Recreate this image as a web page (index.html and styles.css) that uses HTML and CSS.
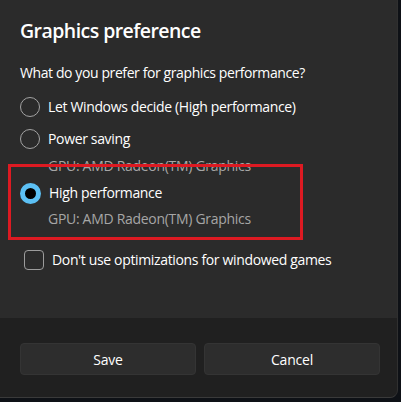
FILE: index.html
```html
<!DOCTYPE html>
<html>
<head>
<meta charset="utf-8">
<link rel="stylesheet" href="styles.css">
</head>
<body>
<div class="dialog">
  <div class="content">
    <div class="title">Graphics preference</div>
    <div class="question">What do you prefer for graphics performance?</div>
    <div class="options">
      <div class="option">
        <span class="radio"></span>
        <span class="label">Let Windows decide (High performance)</span>
      </div>
      <div class="option">
        <span class="radio"></span>
        <span class="label">Power saving</span>
      </div>
      <div class="gpu">GPU: AMD Radeon(TM) Graphics</div>
      <div class="option">
        <span class="radio selected"></span>
        <span class="label">High performance</span>
      </div>
      <div class="gpu">GPU: AMD Radeon(TM) Graphics</div>
    </div>
    <div class="check-row">
      <span class="checkbox"></span>
      <span class="label">Don't use optimizations for windowed games</span>
    </div>
    <div class="highlight"></div>
  </div>
  <div class="footer">
    <div class="btn">Save</div>
    <div class="btn">Cancel</div>
  </div>
</div>
</body>
</html>
```
FILE: styles.css
```css
html, body {
  margin: 0;
  padding: 0;
  background: #0e1116;
}
body {
  width: 401px;
  height: 402px;
  overflow: hidden;
  font-family: "Open Sans", "Noto Sans", sans-serif;
  color: #ffffff;
}
.dialog {
  width: 397px;
  height: 397px;
  background: #2b2b2b;
  border-bottom-right-radius: 8px;
  overflow: hidden;
  display: flex;
  flex-direction: column;
  border-bottom: 1px solid #3a3a3a;
  border-right: 1px solid #303030;
}
.content {
  position: relative;
  height: 318px;
  padding: 17px 20px 0 20px;
  box-sizing: border-box;
}
.title {
  font-size: 19.5px;
  font-weight: 600;
  line-height: 28px;
  letter-spacing: -0.55px;
}
.question {
  margin-top: 18px;
  font-size: 14px;
  line-height: 20px;
  letter-spacing: -0.4px;
}
.options {
  display: flex;
  flex-direction: column;
  margin-top: 8px;
}
.option {
  display: flex;
  align-items: center;
  gap: 8px;
  height: 32px;
}
.label {
  font-size: 14px;
  line-height: 20px;
  letter-spacing: -0.35px;
}
.radio {
  width: 20px;
  height: 20px;
  box-sizing: border-box;
  border: 1px solid #a3a3a3;
  border-radius: 50%;
  flex: none;
}
.radio.selected {
  width: 21px;
  height: 21px;
  border: 5px solid #5cc0f4;
  background: #000000;
}
.gpu {
  padding-left: 28px;
  font-size: 14px;
  line-height: 22px;
  color: #a6a6a6;
  letter-spacing: -0.3px;
}
.gpu:last-child {
  margin-top: -1px;
}
.check-row {
  display: flex;
  align-items: center;
  gap: 8px;
  margin-top: 20px;
  padding-left: 4px;
}
.checkbox {
  width: 20px;
  height: 20px;
  box-sizing: border-box;
  border: 1px solid #9c9c9c;
  border-radius: 4px;
  flex: none;
}
.highlight {
  position: absolute;
  left: 8px;
  top: 164px;
  width: 295px;
  height: 76px;
  box-sizing: border-box;
  border: 3px solid #dd1a22;
}
.footer {
  flex: 1;
  background: #202020;
  display: flex;
  gap: 8px;
  padding: 25px 17px 0 20px;
  box-sizing: border-box;
}
.btn {
  flex: 1;
  height: 32px;
  box-sizing: border-box;
  background: #2d2d2d;
  border: 1px solid #343434;
  border-radius: 4px;
  display: flex;
  align-items: center;
  justify-content: center;
  font-size: 14px;
  letter-spacing: -0.2px;
}
```
